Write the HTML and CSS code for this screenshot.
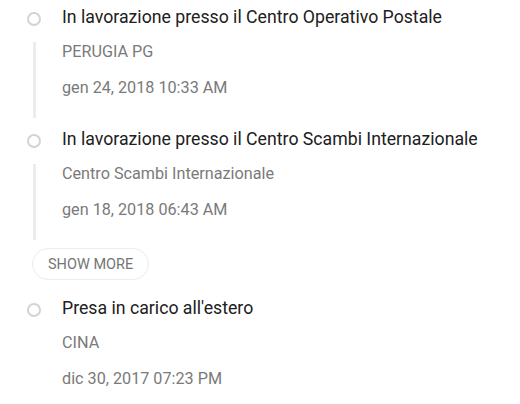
FILE: index.html
```html
<!DOCTYPE html>
<html>
<head>
<meta charset="utf-8">
<link rel="stylesheet" href="styles.css">
</head>
<body>
<div class="timeline">
  <div class="event">
    <div class="head">
      <span class="dot"></span>
      <span class="title">In lavorazione presso il Centro Operativo Postale</span>
    </div>
    <div class="body">
      <div class="line"></div>
      <div class="info">
        <div class="place">PERUGIA PG</div>
        <div class="date">gen 24, 2018 10:33 AM</div>
      </div>
    </div>
  </div>
  <div class="event">
    <div class="head">
      <span class="dot"></span>
      <span class="title">In lavorazione presso il Centro Scambi Internazionale</span>
    </div>
    <div class="body">
      <div class="line"></div>
      <div class="info">
        <div class="place">Centro Scambi Internazionale</div>
        <div class="date">gen 18, 2018 06:43 AM</div>
      </div>
    </div>
  </div>
  <div class="more-row">
    <button class="more">SHOW MORE</button>
  </div>
  <div class="event last">
    <div class="head">
      <span class="dot"></span>
      <span class="title">Presa in carico all'estero</span>
    </div>
    <div class="body">
      <div class="line none"></div>
      <div class="info">
        <div class="place">CINA</div>
        <div class="date">dic 30, 2017 07:23 PM</div>
      </div>
    </div>
  </div>
</div>
</body>
</html>
```
FILE: styles.css
```css
html, body {
  margin: 0;
  padding: 0;
  background: #ffffff;
}
body {
  font-family: Roboto, "Noto Sans", sans-serif;
  width: 520px;
  height: 404px;
  overflow: hidden;
}
.timeline {
  padding: 4px 0 0 27px;
}
.head {
  display: flex;
  align-items: center;
  height: 26px;
}
.dot {
  width: 10px;
  height: 10px;
  border: 2px solid #d3d3d3;
  border-radius: 50%;
  flex: none;
  position: relative;
  top: 2px;
}
.title {
  margin-left: 21px;
  font-size: 17.7px;
  color: #202020;
}
.body {
  display: flex;
  align-items: stretch;
}
.line {
  width: 3px;
  margin-left: 6px;
  margin-top: 12px;
  margin-bottom: 8px;
  background: #ececec;
  flex: none;
}
.line.none {
  background: transparent;
}
.info {
  margin-left: 26px;
  padding-top: 4px;
  padding-bottom: 20px;
}
.place, .date {
  font-size: 16.2px;
  color: #7a7a7a;
  line-height: 36px;
}
.more-row {
  padding: 0 0 15px 5px;
}
.more {
  display: block;
  font-family: Roboto, "Noto Sans", sans-serif;
  font-size: 14.5px;
  color: #757575;
  background: #fff;
  border: 1px solid #ececec;
  border-radius: 16px;
  height: 32px;
  padding: 0 15px;
  cursor: pointer;
}
```
